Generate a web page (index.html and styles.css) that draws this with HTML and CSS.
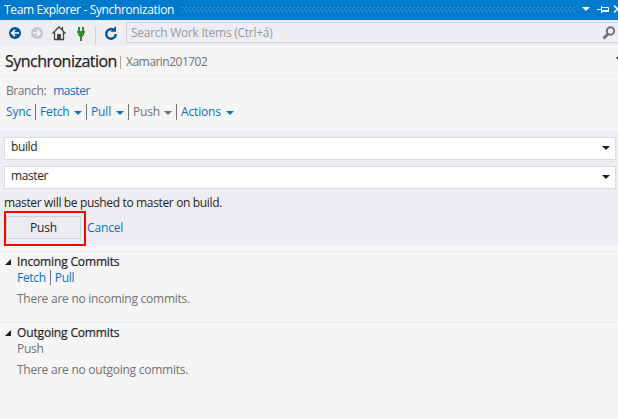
FILE: index.html
```html
<!DOCTYPE html>
<html lang="en">
<head>
<meta charset="utf-8">
<title>Team Explorer</title>
<link rel="stylesheet" href="styles.css">
</head>
<body>
<header class="titlebar">
  <span class="title">Team Explorer - Synchronization</span>
  <svg class="grip" width="394" height="5" shape-rendering="crispEdges"><defs><pattern id="dots" width="4" height="4" patternUnits="userSpaceOnUse"><path d="M0 0h1v1H0zM2 2h1v1H2z" fill="#5aaee6"/></pattern></defs><rect width="394" height="5" fill="url(#dots)"/></svg>
  <svg class="window-tools" width="36" height="20"><path d="M0 7h8L4 11z" fill="#fff"/><path d="M15 9.5h4M19.5 6v7M20 7.500h6.500v4M20 11h7" fill="none" stroke="#fff"/><path d="M20 10h7v2h-7z" fill="#fff"/><path d="M32 5.500l7 7M32 12.500l7-7" stroke="#fff" stroke-width="1.500"/></svg>
</header>
<nav class="toolbar">
  <svg class="tools" width="121" height="26">
    <circle cx="15" cy="13" r="6" fill="#00539c"/><path d="M19 13h-7M15 9.800L11.800 13l3.200 3.200" fill="none" stroke="#fff" stroke-width="1.700"/>
    <circle cx="37" cy="13" r="6" fill="#c6c6c8"/><path d="M33 13h7M37 9.800l3.200 3.200-3.200 3.200" fill="none" stroke="#f3f3f6" stroke-width="1.700"/>
    <path d="M52.500 13.500l6.500-6.500 6.500 6.500M54.500 12v7.500h9V12M62.500 10V7" fill="none" stroke="#424242" stroke-width="1.300"/><path d="M57 14h4v6h-4z" fill="#424242"/>
    <path d="M78 7h2v4h2V7h2v4h1v2h-1v2l-2 2v4h-2v-4l-2-2v-2h-1v-2h1z" fill="#388a34"/>
    <path d="M95.500 6v18" stroke="#cccedb"/>
    <path d="M113.500 9.800A4.800 4.800 0 1 0 115.800 14" fill="none" stroke="#00539c" stroke-width="2.400"/><path d="M110.500 11.800h5.500V6z" fill="#00539c"/>
  </svg>
  <div class="search"><span>Search Work Items (Ctrl+á)</span>
    <svg width="14" height="16"><circle cx="8.500" cy="6" r="3.700" fill="none" stroke="#717171" stroke-width="2"/><path d="M6 9l-4.500 4.500" stroke="#717171" stroke-width="2.800"/></svg>
  </div>
</nav>
<div class="page-head"><h1>Synchronization</h1><i class="sep"></i><span class="project">Xamarin201702</span><svg class="more" width="2" height="4"><path d="M0 0h2v3z" fill="#1e1e1e"/></svg></div>
<section class="branch">
  <div class="line current">Branch:<a class="name">master</a></div>
  <div class="line links"><a class="sync">Sync</a><a class="fetch">Fetch</a><a class="pull">Pull</a><a class="push">Push</a><a class="actions">Actions</a></div>
</section>
<section class="push-panel">
  <div class="combo">build</div>
  <div class="combo">master</div>
  <p class="note">master will be pushed to master on build.</p>
  <div class="buttons"><div class="highlight"><button>Push</button></div><a class="cancel">Cancel</a></div>
</section>
<section class="commits">
  <h2>Incoming Commits</h2>
  <div class="row"><a>Fetch</a><i class="bar"></i><a>Pull</a></div>
  <p>There are no incoming commits.</p>
</section>
<section class="commits">
  <h2>Outgoing Commits</h2>
  <div class="row">Push</div>
  <p>There are no outgoing commits.</p>
</section>
</body>
</html>
```
FILE: styles.css
```css
* { box-sizing: border-box; }
body { margin: 0; width: 618px; height: 419px; overflow: hidden; background: #f5f5f5; color: #1e1e1e; font: 12px/16px "Open Sans", "Noto Sans", sans-serif; letter-spacing: -0.15px; white-space: nowrap; }
h1, h2, p { margin: 0; font-weight: 400; }
a { color: #0e70c0; }
svg { display: block; flex: none; }
.titlebar { height: 20px; background: #007acc; color: #fff; display: flex; padding-left: 4px; }
.title { width: 178px; line-height: 20px; letter-spacing: -0.36px; }
.grip { margin-top: 7px; }
.window-tools { margin-left: 6px; }
.toolbar { height: 26px; background: #eeeef2; display: flex; }
.search { margin: 2px 0 0 5px; height: 21px; flex: 1; border: 1px solid #cccedb; border-right: 0; display: flex; justify-content: space-between; padding: 0 2px 0 4px; line-height: 19px; color: #999; letter-spacing: -0.27px; }
.search svg { margin-top: 2px; }
.page-head { height: 31px; border-bottom: 1px solid #eeeef2; display: flex; align-items: center; padding-left: 5px; }
h1 { width: 112px; font-size: 16px; line-height: 30px; letter-spacing: -0.52px; -webkit-text-stroke: 0.25px #1e1e1e; }
.sep { width: 1px; height: 13px; background: #b9a28f; margin: 2px 5px 0 3px; }
.project { color: #717171; margin-top: 2px; flex: 1; letter-spacing: -0.5px; }
.more { margin-bottom: 4px; }
.branch { height: 54px; padding: 6px 6px 0; color: #717171; }
.line { height: 16px; }
.current { display: flex; letter-spacing: -0.4px; }
.name { margin-left: 7px; letter-spacing: -0.45px; }
.links { margin-top: 5px; display: flex; }
.links a { position: relative; height: 16px; }
.links a + a { border-left: 1px solid #717171; padding-left: 4px; }
.links a + a::after, .combo::after { content: ""; width: 8px; height: 4px; background: currentColor; clip-path: polygon(0 0, 100% 0, 50% 100%); }
.links a + a::after { position: absolute; right: 4px; top: 7px; }
.links .actions::after { right: 5px; }
.sync { width: 29px; }
.fetch { width: 51px; }
.pull { width: 42px; }
.push { width: 48px; }
.links .push { color: #717171; }
.actions { width: 63px; }
.push-panel { height: 114px; background: #eeeef2; padding: 6px 2px 0 4px; }
.combo { height: 23px; margin-bottom: 6px; background: #fff; border: 1px solid #d9dae5; padding: 0 5px 0 6px; display: flex; justify-content: space-between; line-height: 17px; letter-spacing: -0.4px; }
.combo::after { margin-top: 8px; }
.note { line-height: 16px; letter-spacing: -0.35px; }
.buttons { display: flex; }
.highlight { width: 82px; height: 35px; border: 2px solid #f00; padding: 3px 0 0 0; }
button { display: block; width: 75px; height: 23px; padding: 0; border: 1px solid #cccedb; background: #ececf0; color: #1e1e1e; font: inherit; letter-spacing: inherit; }
.cancel { margin: 9px 0 0 1px; }
.commits { height: 71px; border-top: 1px solid #eaeaee; padding: 2px 0 0 17px; color: #717171; }
.push-panel + .commits { margin-top: 6px; }
h2 { position: relative; font-size: 12px; line-height: 16px; color: #1e1e1e; -webkit-text-stroke: 0.2px #1e1e1e; }
h2::before { content: ""; position: absolute; left: -12px; top: 5px; width: 6px; height: 6px; background: #1e1e1e; clip-path: polygon(100% 0, 100% 100%, 0 100%); }
.row { display: flex; height: 16px; letter-spacing: -0.3px; }
.bar { width: 1px; height: 15px; background: #717171; margin: 0 4px 0 4px; }
.commits p { margin-top: 5px; letter-spacing: -0.25px; }
```
